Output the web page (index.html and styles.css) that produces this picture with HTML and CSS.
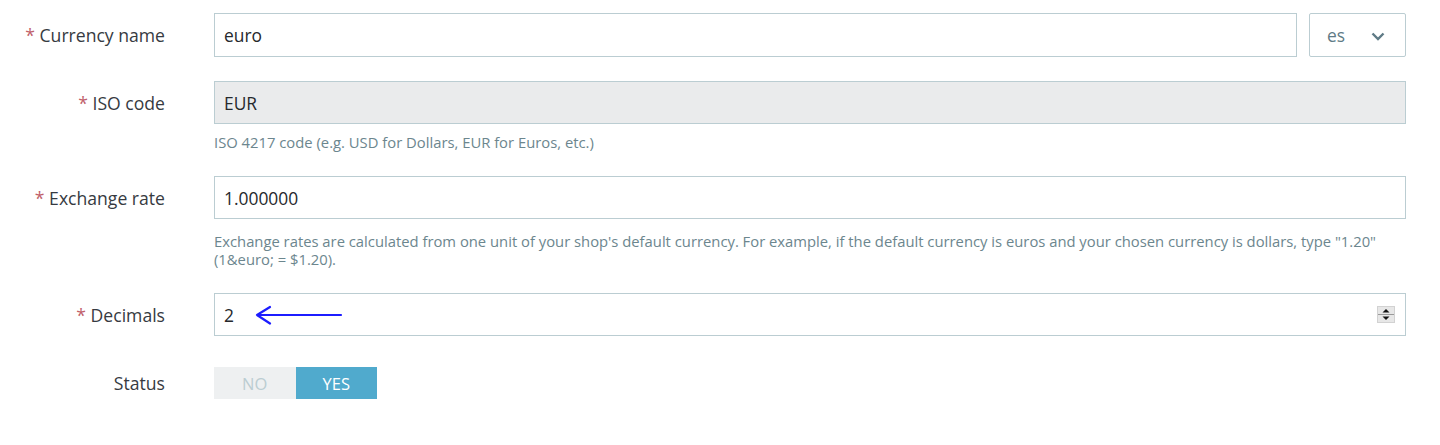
FILE: index.html
```html
<!DOCTYPE html>
<html lang="en">
<head>
<meta charset="utf-8">
<title>Currency</title>
<link rel="stylesheet" href="styles.css">
</head>
<body>
<form class="form">
  <div class="row row-name">
    <div class="label"><span class="req">*</span> Currency name</div>
    <div class="field">
      <div class="name-line">
        <div class="input input-tall grow">euro</div>
        <div class="select">
          <span class="select-text">es</span>
          <svg class="chev" width="14" height="9" viewBox="0 0 14 9"><path d="M1.5 1.5 L7 7 L12.5 1.5" fill="none" stroke="#5f7b86" stroke-width="2.4"/></svg>
        </div>
      </div>
    </div>
  </div>

  <div class="row row-iso">
    <div class="label"><span class="req">*</span> ISO code</div>
    <div class="field">
      <div class="input disabled">EUR</div>
      <p class="help help-iso">ISO 4217 code (e.g. USD for Dollars, EUR for Euros, etc.)</p>
    </div>
  </div>

  <div class="row row-rate">
    <div class="label"><span class="req">*</span> Exchange rate</div>
    <div class="field">
      <div class="input">1.000000</div>
      <p class="help help-rate">Exchange rates are calculated from one unit of your shop's default currency. For example, if the default currency is euros and your chosen currency is dollars, type "1.20" (1&amp;euro; = $1.20).</p>
    </div>
  </div>

  <div class="row row-dec">
    <div class="label"><span class="req">*</span> Decimals</div>
    <div class="field">
      <div class="input number">
        <span class="num-val">2</span>
        <svg class="arrow" width="88" height="20" viewBox="0 0 88 20"><path d="M2 10 H86 M15 2 L2 10 L15 18.5" fill="none" stroke="#1c1cff" stroke-width="2.2" stroke-linecap="round" stroke-linejoin="round"/></svg>
        <span class="spacer"></span>
        <svg class="spin" width="18" height="17" viewBox="0 0 18 17"><rect x="0.5" y="0.5" width="17" height="16" fill="#e7e7e7" stroke="#d2d2d2"/><line x1="1" y1="8.5" x2="17" y2="8.5" stroke="#9a9a9a"/><path d="M5.5 6.5 L9 3 L12.5 6.5 Z" fill="#111"/><path d="M5.5 10.5 L12.5 10.5 L9 14 Z" fill="#111"/></svg>
      </div>
    </div>
  </div>

  <div class="row row-status">
    <div class="label">Status</div>
    <div class="field">
      <div class="toggle">
        <span class="opt opt-no">NO</span>
        <span class="opt opt-yes">YES</span>
      </div>
    </div>
  </div>
</form>
</body>
</html>
```
FILE: styles.css
```css
html, body {
  margin: 0;
  padding: 0;
  background: #ffffff;
}
body {
  font-family: "Open Sans", "Noto Sans", "Liberation Sans", sans-serif;
  color: #363a41;
  width: 1440px;
  height: 445px;
  overflow: hidden;
}
.form {
  display: flex;
  flex-direction: column;
  padding: 13px 34px 0 0;
}
.row {
  display: grid;
  grid-template-columns: 165px 1fr;
  column-gap: 49px;
  align-items: start;
}
.label {
  height: 43px;
  display: flex;
  align-items: center;
  justify-content: flex-end;
  font-size: 17.6px;
  color: #363a41;
  white-space: pre;
}
.req {
  color: #c0606a;
}
.field {
  display: flex;
  flex-direction: column;
  min-width: 0;
}
.name-line {
  display: flex;
  gap: 12px;
}
.grow {
  flex: 1;
}
.input {
  box-sizing: border-box;
  height: 43px;
  border: 1px solid #bbcdd2;
  background: #ffffff;
  padding: 0 9px;
  display: flex;
  align-items: center;
  font-size: 17.4px;
  color: #25282c;
}
.input-tall {
  height: 44px;
}
.row-name .label {
  height: 44px;
}
.disabled {
  background: #eaebec;
}
.select {
  box-sizing: border-box;
  width: 97px;
  height: 44px;
  border: 1px solid #bbcdd2;
  border-radius: 2px;
  display: flex;
  align-items: center;
  padding: 0 0 0 17px;
  gap: 26px;
  font-size: 17.4px;
  color: #5f7b86;
}
.chev {
  margin-top: 2px;
}
.help {
  margin: 0;
  font-size: 14.8px;
  line-height: 18px;
  color: #6c868e;
}
.help-iso {
  margin-top: 9px;
}
.help-rate {
  margin-top: 13px;
}
.row-iso {
  margin-top: 24px;
}
.row-rate {
  margin-top: 25px;
}
.row-dec {
  margin-top: 25px;
}
.row-status {
  margin-top: 24px;
}
.number {
  padding-right: 10px;
}
.arrow {
  margin-left: 21px;
}
.spacer {
  flex: 1;
}
.spin {
  display: block;
}
.row-status .label {
  height: 46px;
}
.toggle {
  display: flex;
  width: 163px;
  height: 32px;
  margin-top: 7px;
}
.opt {
  flex: 1;
  display: flex;
  align-items: center;
  justify-content: center;
  font-size: 16.5px;
  text-transform: uppercase;
}
.opt-no {
  background: #eef0f1;
  color: #bbcdd2;
}
.opt-yes {
  background: #50aacd;
  color: #ffffff;
}
```
